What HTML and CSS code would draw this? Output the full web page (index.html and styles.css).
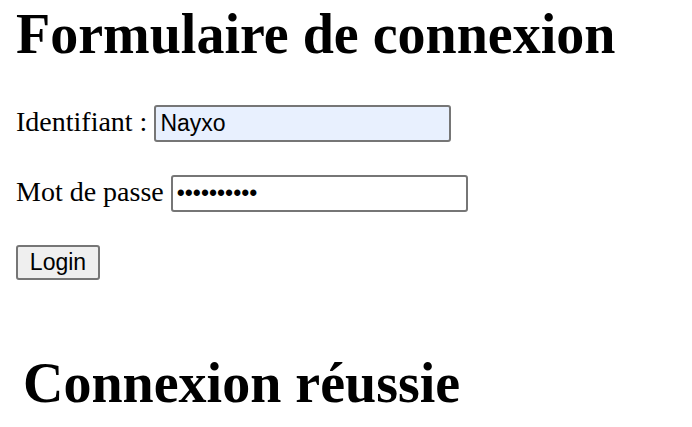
FILE: index.html
```html
<!DOCTYPE html>
<html lang="fr">
<head>
<meta charset="utf-8">
<title>Formulaire de connexion</title>
<link rel="stylesheet" href="styles.css">
</head>
<body>
<h1 class="title">Formulaire de connexion</h1>
<form class="login-form">
  <p class="field">Identifiant : <input class="text-input autofilled" type="text" value="Nayxo"></p>
  <p class="field">Mot de passe <input class="text-input" type="password" value="abcdefghij"></p>
  <p class="field"><button class="login-btn" type="button">Login</button></p>
</form>
<h1 class="title success">Connexion réussie</h1>
</body>
</html>
```

FILE: styles.css
```css
html, body {
  background: #ffffff;
}
body {
  margin: 0;
  padding: 3px 0 0 16px;
  font-family: "Liberation Serif", "Times New Roman", serif;
  font-size: 28px;
  color: #000000;
}
.title {
  font-size: 56px;
  font-weight: bold;
  line-height: 62px;
  margin: 0 0 40px 0;
}
.login-form {
  margin: 0;
}
.field {
  margin: 0 0 33px 0;
  line-height: 32px;
}
.text-input {
  box-sizing: border-box;
  width: 297px;
  height: 37px;
  padding: 2px 4px;
  border: 2px solid #767676;
  border-radius: 3px;
  background: #ffffff;
  font-family: "Liberation Sans", Arial, sans-serif;
  font-size: 23px;
  color: #000000;
  vertical-align: baseline;
}
.autofilled {
  background: #e8f0fe;
}
.login-btn {
  box-sizing: border-box;
  width: 84px;
  height: 35px;
  padding: 0 10px;
  border: 2px solid #767676;
  border-radius: 3px;
  background: #efefef;
  font-family: "Liberation Sans", Arial, sans-serif;
  font-size: 23px;
  color: #000000;
}
.success {
  margin: 72px 0 0 7px;
}
```
